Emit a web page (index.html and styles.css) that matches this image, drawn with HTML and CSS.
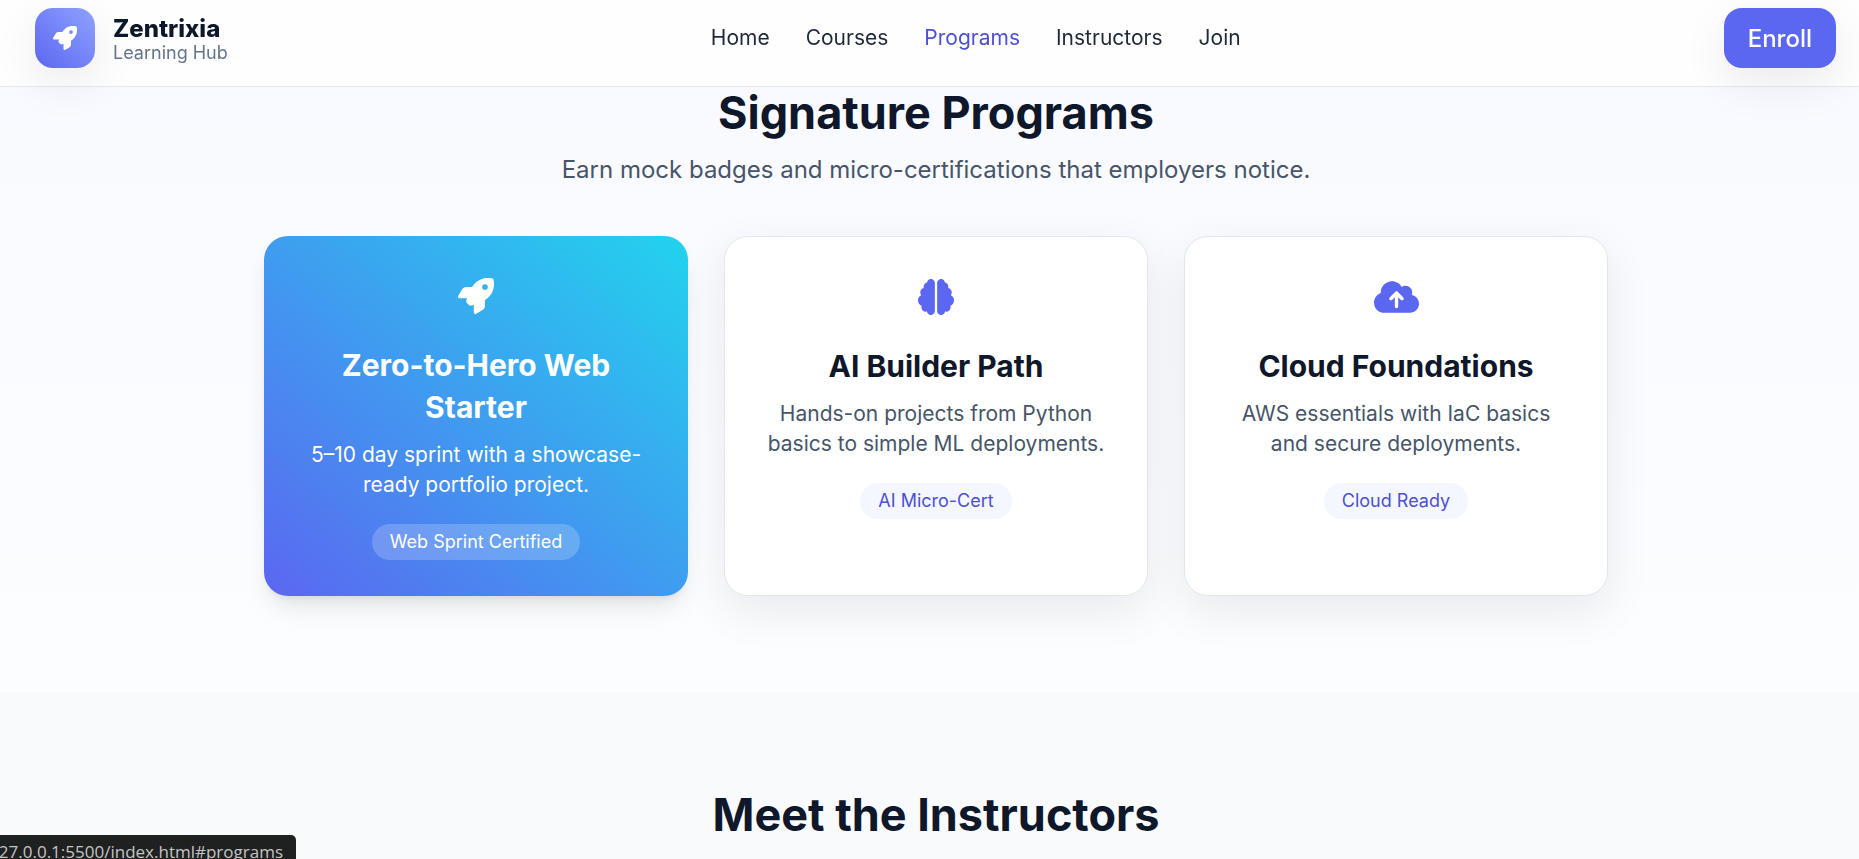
FILE: index.html
```html
<!DOCTYPE html>
<html lang="en">
<head>
<meta charset="utf-8">
<meta name="viewport" content="width=device-width, initial-scale=1">
<title>Zentrixia Learning Hub</title>
<link rel="stylesheet" href="styles.css">
</head>
<body>
<svg class="sprite" aria-hidden="true">
  <symbol id="rocket" viewBox="0 0 512 512"><path d="M156.6 384.9L125.7 354c-8.5-8.5-11.5-20.8-7.7-32.2c3-8.9 7-20.5 11.8-33.8L24 288c-8.6 0-16.6-4.6-20.9-12.1s-4.2-16.7 .2-24.1l52.5-88.5c13-21.9 36.5-35.3 61.9-35.3l82.3 0c2.4-4 4.8-7.7 7.2-11.3C289.1-4.1 411.1-8.1 483.9 5.3c11.6 2.1 20.6 11.2 22.8 22.8c13.4 72.9 9.3 194.8-111.4 276.7c-3.5 2.4-7.3 4.8-11.3 7.2v82.3c0 25.4-13.4 49-35.3 61.9l-88.5 52.5c-7.4 4.4-16.6 4.5-24.1 .2s-12.1-12.2-12.1-20.9V380.8c-14.1 4.9-26.4 8.9-35.7 11.9c-11.2 3.6-23.4 .5-31.8-7.8zM384 168a40 40 0 1 0 0-80 40 40 0 1 0 0 80z"/></symbol>
  <symbol id="brain" viewBox="0 0 512 512"><path d="M184 0c30.9 0 56 25.1 56 56V456c0 30.9-25.1 56-56 56c-28.9 0-52.7-21.9-55.7-50.1c-5.2 1.4-10.7 2.1-16.3 2.1c-35.3 0-64-28.7-64-64c0-7.4 1.3-14.6 3.6-21.2C21.4 367.4 0 338.2 0 304c0-31.9 18.7-59.5 45.8-72.3C37.1 220.8 32 207 32 192c0-30.7 21.6-56.3 50.4-62.6C80.8 123.9 80 118 80 112c0-29.9 20.6-55.1 48.3-62.1C131.3 21.9 155.1 0 184 0zM328 0c28.9 0 52.6 21.9 55.7 49.9c27.8 7 48.3 32.1 48.3 62.1c0 6-.8 11.9-2.4 17.4c28.8 6.2 50.4 31.9 50.4 62.6c0 15-5.1 28.8-13.8 39.7C493.3 244.5 512 272.1 512 304c0 34.2-21.4 63.4-51.6 74.8c2.3 6.6 3.6 13.8 3.6 21.2c0 35.3-28.7 64-64 64c-5.6 0-11.1-.7-16.3-2.1c-3 28.2-26.8 50.1-55.7 50.1c-30.9 0-56-25.1-56-56V56c0-30.9 25.1-56 56-56z"/></symbol>
  <symbol id="cloud-up" viewBox="0 0 640 512"><path d="M144 480C64.5 480 0 415.5 0 336c0-62.8 40.2-116.2 96.2-135.9c-.1-2.7-.2-5.4-.2-8.1c0-88.4 71.6-160 160-160c59.3 0 111 32.2 138.7 80.2C409.9 102 428.3 96 448 96c53 0 96 43 96 96c0 12.2-2.3 23.8-6.4 34.6C596 238.4 640 290.1 640 352c0 70.7-57.3 128-128 128H144zm79-217c-9.4 9.4-9.4 24.6 0 33.9s24.6 9.4 33.9 0l39-39V392c0 13.3 10.7 24 24 24s24-10.7 24-24V257.9l39 39c9.4 9.4 24.6 9.4 33.9 0s9.4-24.6 0-33.9l-80-80c-9.4-9.4-24.6-9.4-33.9 0l-80 80z"/></symbol>
</svg>

<header class="site-header">
  <a class="brand" href="#home">
    <span class="brand-logo"><svg class="icon-small" aria-hidden="true"><use href="#rocket"/></svg></span>
    <span class="brand-text">
      <span class="brand-name">Zentrixia</span>
      <span class="brand-sub">Learning Hub</span>
    </span>
  </a>
  <nav class="nav">
    <a class="nav-link" href="#home">Home</a>
    <a class="nav-link" href="#courses">Courses</a>
    <a class="nav-link active" href="#programs">Programs</a>
    <a class="nav-link" href="#instructors">Instructors</a>
    <a class="nav-link" href="#join">Join</a>
  </nav>
  <button class="enroll" type="button">Enroll</button>
</header>

<main>
  <section class="programs" id="programs">
    <h2 class="section-title">Signature Programs</h2>
    <p class="section-sub">Earn mock badges and micro-certifications that employers notice.</p>
    <div class="cards">
      <article class="card featured">
        <div class="card-icon"><svg class="icon" aria-hidden="true"><use href="#rocket"/></svg></div>
        <h3 class="card-title">Zero-to-Hero Web Starter</h3>
        <p class="card-text">5–10 day sprint with a showcase-ready portfolio project.</p>
        <span class="badge">Web Sprint Certified</span>
      </article>
      <article class="card">
        <div class="card-icon"><svg class="icon" aria-hidden="true"><use href="#brain"/></svg></div>
        <h3 class="card-title">AI Builder Path</h3>
        <p class="card-text">Hands-on projects from Python basics to simple ML deployments.</p>
        <span class="badge">AI Micro-Cert</span>
      </article>
      <article class="card">
        <div class="card-icon"><svg class="icon icon-wide" aria-hidden="true"><use href="#cloud-up"/></svg></div>
        <h3 class="card-title">Cloud Foundations</h3>
        <p class="card-text">AWS essentials with IaC basics and secure deployments.</p>
        <span class="badge">Cloud Ready</span>
      </article>
    </div>
  </section>
  <section class="instructors" id="instructors">
    <h2 class="section-title">Meet the Instructors</h2>
  </section>
</main>

<div class="status-bar"><span>127.0.0.1:5500/index.html#programs</span></div>
</body>
</html>
```

FILE: styles.css
```css
* {
  box-sizing: border-box;
}

body {
  margin: 0;
  height: 100vh;
  overflow: hidden;
  background: #f9fafc;
  color: #0f172a;
  font-family: Inter, "Liberation Sans", sans-serif;
}

h2, h3, p {
  margin: 0;
}

a {
  color: inherit;
  text-decoration: none;
}

.sprite {
  position: absolute;
  width: 0;
  height: 0;
}

.site-header {
  position: sticky;
  top: 0;
  z-index: 10;
  display: flex;
  align-items: center;
  justify-content: space-between;
  margin-bottom: -1px;
  padding: 8px 23px 18px 35px;
  background: rgba(255, 255, 255, 0.8);
  border-bottom: 1px solid #e2e8f0;
}

.brand {
  display: flex;
  align-items: center;
  gap: 18px;
}

.brand-logo {
  display: grid;
  place-items: center;
  width: 60px;
  height: 60px;
  border-radius: 18px;
  background: linear-gradient(to top right, #5b67f1, #8fa2ff);
  color: #fff;
  box-shadow: 0 15px 45px rgba(2, 6, 23, 0.08);
}

.icon-small {
  width: 24px;
  height: 24px;
  fill: currentColor;
}

.brand-text {
  display: flex;
  flex-direction: column;
}

.brand-name {
  font-size: 24px;
  font-weight: 800;
  line-height: 30px;
}

.brand-sub {
  color: #64748b;
  font-size: 18px;
  line-height: 18px;
}

.nav {
  display: flex;
  gap: 36px;
}

.nav-link {
  color: #1f2937;
  font-size: 21px;
  line-height: 30px;
}

.nav-link.active {
  color: #4f4fd1;
}

.enroll {
  height: 60px;
  padding: 0 24px;
  border: 0;
  border-radius: 18px;
  background: #5b67f1;
  color: #fff;
  font: 500 24px Inter, "Liberation Sans", sans-serif;
  box-shadow: 0 15px 45px rgba(2, 6, 23, 0.08);
}

.programs,
.instructors {
  padding-left: 13px;
  text-align: center;
}

.programs {
  padding-bottom: 96px;
  background: linear-gradient(#f9faff, #fcfdff);
}

.instructors {
  padding-top: 96px;
  padding-bottom: 96px;
}

.section-title {
  font-size: 45px;
  font-weight: 700;
  line-height: 54px;
}

.section-sub {
  margin-top: 12px;
  color: #475569;
  font-size: 24px;
  line-height: 36px;
}

.cards {
  display: grid;
  grid-template-columns: repeat(3, 1fr);
  gap: 36px;
  max-width: 1344px;
  margin: 48px auto 0;
}

.card {
  padding: 36px;
  border: 1px solid #e2e8f0;
  border-radius: 24px;
  background: #fff;
  box-shadow: 0 15px 45px rgba(2, 6, 23, 0.08);
}

.featured {
  border: 0;
  background: linear-gradient(to top right, #5b67f1, #22d3ee);
  color: #fff;
  box-shadow: 0 15px 23px -5px rgba(0, 0, 0, 0.1), 0 6px 9px -6px rgba(0, 0, 0, 0.1);
}

.card-icon {
  display: grid;
  place-items: center;
  height: 48px;
  margin-bottom: 24px;
  color: #5b67f1;
}

.icon {
  width: 36px;
  height: 36px;
  fill: currentColor;
}

.icon-wide {
  width: 45px;
}

.card-title {
  font-size: 30px;
  font-weight: 700;
  line-height: 42px;
}

.card-text {
  margin-top: 12px;
  color: #475569;
  font-size: 21px;
  line-height: 30px;
}

.badge {
  display: block;
  width: fit-content;
  margin: 24px auto 0;
  padding: 0 18px;
  border-radius: 18px;
  background: #f4f7ff;
  color: #4f4fd1;
  font-size: 18px;
  line-height: 36px;
}

.featured .card-icon,
.featured .card-text,
.featured .badge {
  color: #fff;
}

.featured .badge {
  background: rgba(255, 255, 255, 0.2);
}

.status-bar {
  position: fixed;
  left: 0;
  bottom: 0;
  z-index: 20;
  display: flex;
  justify-content: flex-end;
  width: 296px;
  height: 24px;
  padding: 4px 13px 0 0;
  overflow: hidden;
  border-top-right-radius: 5px;
  background: #1f2020;
  color: #c4c4c4;
  font: 17px/26px "Open Sans", "Noto Sans", sans-serif;
  white-space: nowrap;
}
```
